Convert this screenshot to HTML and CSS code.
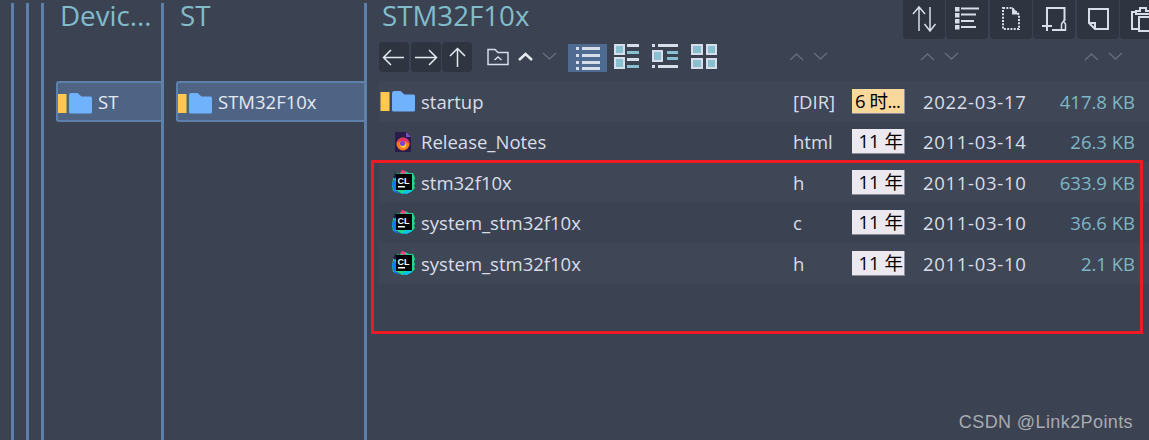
FILE: index.html
```html
<!DOCTYPE html>
<html lang="zh">
<head>
<meta charset="utf-8">
<title>STM32F10x</title>
<link rel="stylesheet" href="styles.css">
</head>
<body>
<svg class="defs" width="0" height="0" aria-hidden="true">
  <defs>
    <g id="folder">
      <rect x="0.5" y="2" width="9" height="19" fill="#ffc94f"/>
      <path d="M12 3.5Q12 1 14 1H20.5L24.5 4.5H33.5Q35 4.5 35 6V20Q35 21.500 33.500 21.500H13.500Q12 21.500 12 20Z" fill="#70b2fb"/>
    </g>
    <g id="clion">
      <path d="M3 5 6 3 8 4 11 2 14 1 18 3 22 3 24 8 23 11 24 13 23 16 24 18 20 22 15 23 11 24 6 21 2 21 1 15 2 9Z" fill="#21d789"/>
      <path d="M1 14 3 9 6 12 5 21 9 24 3 22Z" fill="#087cfa"/>
      <path d="M10 23 16 24 21 21 18 19Z" fill="#07c3f2"/>
      <path d="M9 3 11 0 14 1 15 4Z" fill="#fc3f81"/>
      <path d="M2 7 4 3 7 4 4 9Z" fill="#0b2b3a"/>
      <rect x="5" y="4" width="16" height="16" fill="#000"/>
      <text x="6.600" y="13.500" class="cl">CL</text>
      <rect x="7" y="16" width="7" height="1.500" fill="#fff"/>
    </g>
    <g id="firefox">
      <path d="M1 1H12L17 6V21H1Z" fill="#2b1b4c"/>
      <path d="M12 1 17 6H12Z" fill="#7a4fc2"/>
      <circle cx="9" cy="13" r="6.500" fill="#ff7a1f"/>
      <path d="M3 12Q5 6 11 7 15 8 15.500 13 13 10 9 10 5 10 3 12Z" fill="#e62f6c"/>
      <path d="M6 14Q9 11 12 13 13 16 9.500 17 6.500 17 6 14Z" fill="#ffd23f"/>
      <circle cx="8.500" cy="12.500" r="2.500" fill="#7542e5"/>
    </g>
    <g id="caret-up"><path d="M1 8 7.500 2 14 8" fill="none" stroke="#666c78" stroke-width="1.500"/></g>
    <g id="caret-down"><path d="M1 1 7.500 7 14 1" fill="none" stroke="#666c78" stroke-width="1.500"/></g>
  </defs>
</svg>

<div class="spine"></div>
<div class="spine"></div>

<section class="pane pane-devices">
  <h2 class="title">Devic...</h2>
  <div class="selected">
    <svg class="ico-folder" viewBox="0 0 36 22" width="36" height="22"><use href="#folder"/></svg>
    <span>ST</span>
  </div>
</section>

<section class="pane pane-st">
  <h2 class="title">ST</h2>
  <div class="selected">
    <svg class="ico-folder" viewBox="0 0 36 22" width="36" height="22"><use href="#folder"/></svg>
    <span>STM32F10x</span>
  </div>
</section>

<section class="pane pane-main">
  <header class="head">
    <h2 class="title">STM32F10x</h2>
    <div class="toolbar">
      <button class="tool"><svg viewBox="0 0 42 38" width="42" height="38"><path d="M16 30V6M10 13 16 6 22 13M27 6V30M21.500 23 27 30 32.500 23" fill="none" stroke="#d8dee9" stroke-width="1.500"/></svg></button>
      <button class="tool"><svg viewBox="0 0 42 38" width="42" height="38"><g fill="#d8dee9"><rect x="9" y="6" width="4.500" height="4.500"/><rect x="9" y="12" width="4.500" height="4.500"/><rect x="9" y="18" width="4.500" height="4.500"/><rect x="9" y="24" width="4.500" height="4.500"/></g><path d="M15 7.500H33M15 13.500H30M15 20H28M15 26H30" fill="none" stroke="#d8dee9" stroke-width="2"/></svg></button>
      <button class="tool"><svg viewBox="0 0 42 38" width="42" height="38"><path d="M13 7H22L29 13.500V28H13Z" fill="none" stroke="#d8dee9" stroke-width="2" stroke-dasharray="2 1.300"/><path d="M22 6 29 13.500H22Z" fill="#d8dee9"/></svg></button>
      <button class="tool"><svg viewBox="0 0 42 38" width="42" height="38"><path d="M14 20V7H31.500V20M19 29H33M9 25H19M14 20V30" fill="none" stroke="#d8dee9" stroke-width="2"/><path d="M28.500 29V23L30.500 20 32.500 23V29Z" fill="none" stroke="#d8dee9" stroke-width="1.500"/></svg></button>
      <button class="tool"><svg viewBox="0 0 42 38" width="42" height="38"><path d="M12 8H31V28H18L12 22Z" fill="none" stroke="#d8dee9" stroke-width="2"/><path d="M12 22H18V28" fill="none" stroke="#d8dee9" stroke-width="2"/></svg></button>
      <button class="tool"><svg viewBox="0 0 42 38" width="42" height="38"><path d="M17 11H12V28H18M30 11V15" fill="none" stroke="#d8dee9" stroke-width="2"/><path d="M16 10H20V7H26V10H30V13H16Z" fill="none" stroke="#d8dee9" stroke-width="2"/><rect x="19" y="16" width="16" height="14" fill="none" stroke="#d8dee9" stroke-width="2"/></svg></button>
    </div>
  </header>

  <div class="nav">
    <button class="navbtn"><svg viewBox="0 0 30 30" width="30" height="30"><path d="M25 15.500H4.500M12 8 4.500 15.500 12 23" fill="none" stroke="#e5e9f0" stroke-width="1.500"/></svg></button>
    <button class="navbtn"><svg viewBox="0 0 30 30" width="30" height="30"><path d="M4 15.500H25.500M18 8 25.500 15.500 18 23" fill="none" stroke="#e5e9f0" stroke-width="1.500"/></svg></button>
    <button class="navbtn"><svg viewBox="0 0 30 30" width="30" height="30"><path d="M15.500 25V6.500M8 14 15.500 6.500 23 14" fill="none" stroke="#e5e9f0" stroke-width="1.500"/></svg></button>
    <svg class="nav-folder" viewBox="0 0 22 18" width="22" height="18"><path d="M1 16.500V1.500H8L11 4.500H21V16.500Z" fill="none" stroke="#d8dee9" stroke-width="1.500"/><path d="M7.500 12 11 9 14.500 12" fill="none" stroke="#d8dee9" stroke-width="1.500"/></svg>
    <svg class="chev-up" viewBox="0 0 15 10" width="15" height="10"><path d="M1 8 7.500 2 14 8" fill="none" stroke="#e5e9f0" stroke-width="2.500"/></svg>
    <svg class="chev-down" viewBox="0 0 15 10" width="15" height="10"><use href="#caret-down"/></svg>

    <button class="view view-on"><svg viewBox="0 0 39 28" width="39" height="28"><g fill="#d8dee9"><rect x="8" y="3" width="3" height="3"/><rect x="14" y="3" width="18" height="3"/><rect x="8" y="10" width="3" height="3"/><rect x="14" y="10" width="18" height="3"/><rect x="8" y="17" width="3" height="3"/><rect x="14" y="17" width="18" height="3"/><rect x="8" y="23" width="3" height="3"/><rect x="14" y="23" width="18" height="3"/></g></svg></button>
    <svg class="view-a" viewBox="0 0 26 26" width="26" height="26"><g fill="#d8dee9"><rect width="11" height="11"/><rect y="13" width="11" height="12"/><rect x="13" width="12" height="3"/><rect x="13" y="14" width="12" height="3"/></g><g fill="#88c0d0"><rect x="2" y="2" width="7" height="7"/><rect x="2" y="15" width="7" height="8"/><rect x="13" y="7" width="12" height="3"/><rect x="13" y="21" width="12" height="3"/></g></svg>
    <svg class="view-b" viewBox="0 0 26 26" width="26" height="26"><g fill="#d8dee9"><rect width="3" height="3"/><rect x="6" width="20" height="3"/><rect y="21" width="3" height="3"/><rect x="6" y="21" width="20" height="3"/><rect y="6" width="11" height="12"/></g><g fill="#88c0d0"><rect x="2" y="8" width="7" height="8"/><rect x="15" y="7" width="11" height="3"/><rect x="15" y="13" width="11" height="3"/></g></svg>
    <svg class="view-c" viewBox="0 0 26 26" width="26" height="26"><g fill="#d8dee9"><rect width="12" height="11"/><rect x="15" width="11" height="11"/><rect y="14" width="12" height="11"/><rect x="15" y="14" width="11" height="11"/></g><g fill="#88c0d0"><rect x="2" y="2" width="8" height="7"/><rect x="17" y="2" width="7" height="7"/><rect x="2" y="16" width="8" height="7"/><rect x="17" y="16" width="7" height="7"/></g></svg>

    <svg class="sort s1" viewBox="0 0 15 10" width="15" height="10"><use href="#caret-up"/></svg>
    <svg class="sort s2" viewBox="0 0 15 10" width="15" height="10"><use href="#caret-down"/></svg>
    <svg class="sort s3" viewBox="0 0 15 10" width="15" height="10"><use href="#caret-up"/></svg>
    <svg class="sort s2" viewBox="0 0 15 10" width="15" height="10"><use href="#caret-down"/></svg>
    <svg class="sort s4" viewBox="0 0 15 10" width="15" height="10"><use href="#caret-up"/></svg>
    <svg class="sort s2" viewBox="0 0 15 10" width="15" height="10"><use href="#caret-down"/></svg>
  </div>

  <ul class="files">
    <li class="row">
      <span class="icon"><svg viewBox="0 0 36 22" width="36" height="22"><use href="#folder"/></svg></span>
      <span class="name">startup</span><span class="ext">[DIR]</span>
      <span class="tag tag-new">6 时...</span><span class="date">2022-03-17</span><span class="size">417.8 KB</span>
    </li>
    <li class="row">
      <span class="icon"><svg class="ff" viewBox="0 0 18 22" width="18" height="22"><use href="#firefox"/></svg></span>
      <span class="name">Release_Notes</span><span class="ext">html</span>
      <span class="tag">11 年</span><span class="date">2011-03-14</span><span class="size">26.3 KB</span>
    </li>
    <li class="row">
      <span class="icon"><svg class="cl-ico" viewBox="0 0 25 25" width="25" height="25"><use href="#clion"/></svg></span>
      <span class="name">stm32f10x</span><span class="ext">h</span>
      <span class="tag">11 年</span><span class="date">2011-03-10</span><span class="size">633.9 KB</span>
    </li>
    <li class="row">
      <span class="icon"><svg class="cl-ico" viewBox="0 0 25 25" width="25" height="25"><use href="#clion"/></svg></span>
      <span class="name">system_stm32f10x</span><span class="ext">c</span>
      <span class="tag">11 年</span><span class="date">2011-03-10</span><span class="size">36.6 KB</span>
    </li>
    <li class="row">
      <span class="icon"><svg class="cl-ico" viewBox="0 0 25 25" width="25" height="25"><use href="#clion"/></svg></span>
      <span class="name">system_stm32f10x</span><span class="ext">h</span>
      <span class="tag">11 年</span><span class="date">2011-03-10</span><span class="size">2.1 KB</span>
    </li>
  </ul>
</section>

<div class="highlight"></div>
<div class="watermark">CSDN @Link2Points</div>
</body>
</html>
```

FILE: styles.css
```css
* { box-sizing: border-box; }
html, body { height: 100%; }
body {
  margin: 0;
  height: 440px;
  overflow: hidden;
  padding-left: 11px;
  display: flex;
  background: #3b4252;
  color: #d8dee9;
  font-family: "Open Sans", "Noto Sans CJK SC", sans-serif;
  font-size: 18.500px;
  position: relative;
}
.defs { position: absolute; }
.cl { font: 700 9px "Liberation Sans", sans-serif; fill: #fff; }
button { border: 0; padding: 0; margin: 0; background: none; display: block; }
svg { display: block; }

.spine, .pane {
  margin-top: 3px;
  border-left: 3px solid #5e81ac;
  flex: none;
}
.spine { width: 15px; }
.pane { min-width: 0; }
.pane-devices { width: 120px; }
.pane-st { width: 203px; }
.pane-main { flex: 1; display: flex; flex-direction: column; }

.title {
  margin: -3px 0 0;
  font-weight: 400;
  font-size: 27.700px;
  line-height: 30px;
  color: #82bccb;
  white-space: nowrap;
  flex: none;
}
.pane-devices .title { padding-left: 16px; }
.pane-st .title { padding-left: 16px; }
.pane-main .title { padding-left: 15px; margin-top: 0; }

.selected {
  margin-top: 51px;
  height: 41px;
  display: flex;
  align-items: center;
  gap: 5px;
  background: #4f6385;
  border: 2px solid #5e81ac;
  border-right: 0;
  border-radius: 3px 0 0 3px;
  color: #e5e9f0;
  white-space: nowrap;
  overflow: hidden;
}
.pane-devices .selected { margin-left: 12px; }
.pane-st .selected { margin-left: 12px; }
.ico-folder { margin-top: 2px; margin-left: -1px; flex: none; }

.head { display: flex; height: 39px; margin-top: -3px; }
.toolbar { margin-left: auto; display: flex; gap: 1.500px; margin-right: -13px; }
.tool {
  width: 42px;
  height: 39px;
  background: #2e3440;
  border-radius: 0 0 4px 4px;
  flex: none;
}

.nav {
  display: flex;
  align-items: center;
  height: 30px;
  margin-top: 3px;
  padding-left: 12px;
  flex: none;
}
.navbtn {
  width: 30px;
  height: 30px;
  background: #2e3440;
  border-radius: 4px;
  margin-right: 1.500px;
  flex: none;
}
.nav-folder { margin-left: 13.500px; }
.chev-up { margin-left: 9px; }
.chev-down { margin-left: 9px; }
.view { width: 39px; height: 28px; margin-left: 11px; margin-top: 2px; }
.view-on { background: #4f6b91; }
.view-a { margin-left: 7px; }
.view-b { margin-left: 12px; }
.view-c { margin-left: 13px; }
.sort { flex: none; }
.s1 { margin-left: 72px; }
.s2 { margin-left: 9px; }
.s3 { margin-left: 92px; }
.s4 { margin-left: 125px; }

.files { list-style: none; margin: 9px 0 0 12px; padding: 0; }
.row {
  display: grid;
  grid-template-columns: 42px 372px 59px 71px 105px 1fr;
  align-items: center;
  height: 40.500px;
  padding-right: 14px;
  white-space: nowrap;
}
.row:nth-child(odd) { background: #3f4656; }
.icon { display: flex; }
.icon svg { margin-left: 1px; }
.icon .ff { margin-left: 15px; }
.icon .cl-ico { margin-left: 12px; }
.tag {
  width: 53px;
  height: 25px;
  line-height: 24px;
  background: #ebe8ef;
  border-right: 1px solid #8d8d99;
  border-bottom: 1px solid #8d8d99;
  color: #000;
  text-align: right;
  padding-right: 1px;
  overflow: hidden;
}
.tag-new { background: #f9d99b; text-align: left; padding-left: 3px; letter-spacing: -0.500px; }
.date { letter-spacing: 0.700px; }
.size { color: #7fb6c6; text-align: right; }

.highlight {
  position: absolute;
  left: 371px;
  top: 160px;
  width: 772px;
  height: 174px;
  border: 3px solid #ed1c24;
}
.watermark {
  position: absolute;
  right: 16px;
  top: 412px;
  font: 18px/21px "Liberation Sans", sans-serif;
  letter-spacing: 0.400px;
  color: #a8abb0;
}
```
